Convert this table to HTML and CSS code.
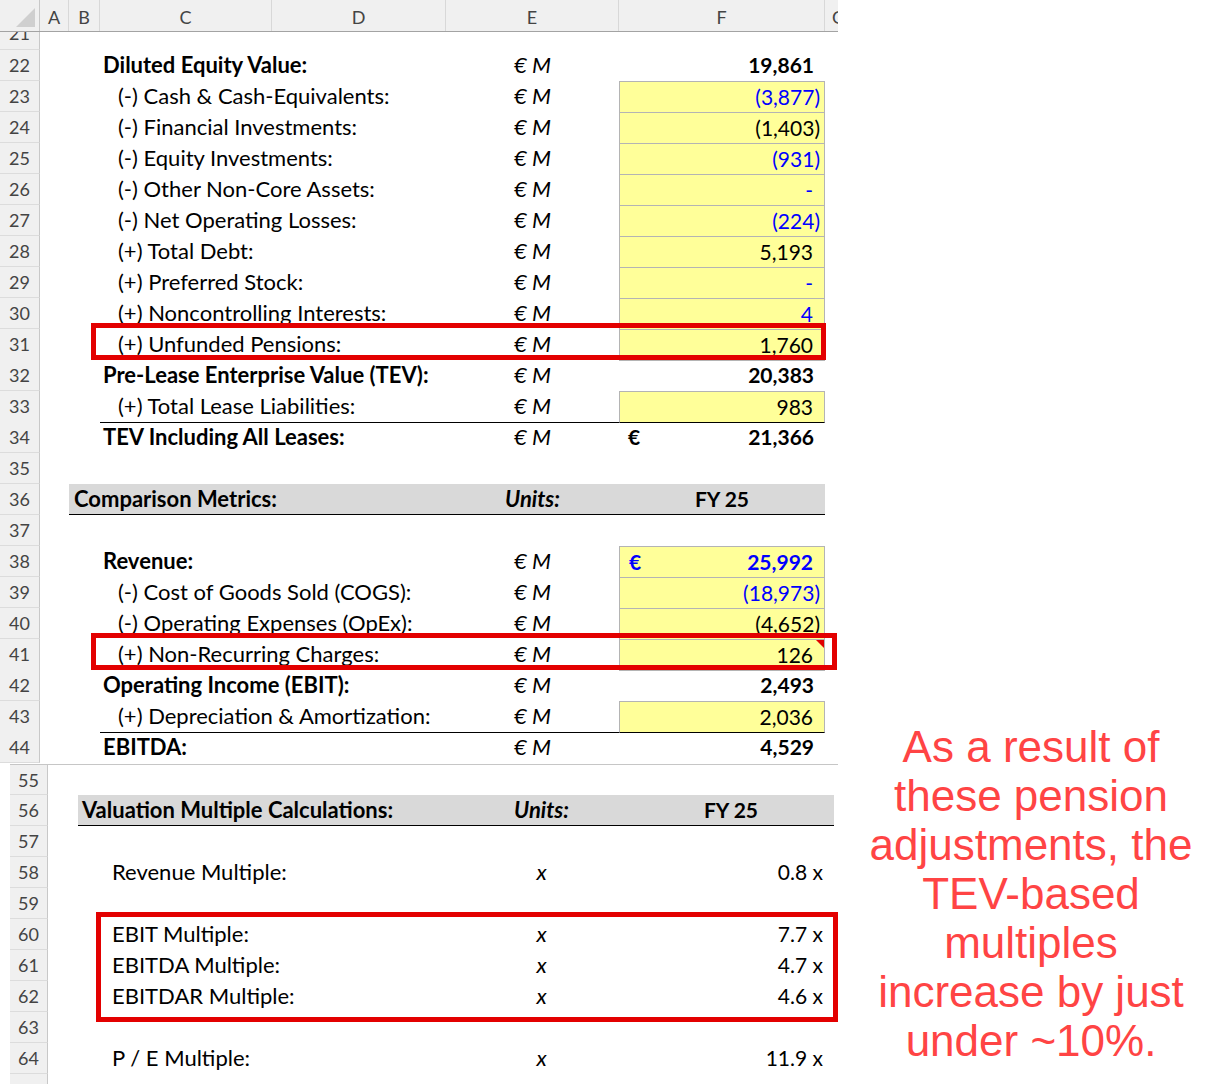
FILE: index.html
```html
<!DOCTYPE html>
<html lang="en">
<head>
<meta charset="utf-8">
<title>Valuation sheet</title>
<link rel="stylesheet" href="styles.css">
</head>
<body>
<div class="page">
  <div class="sheets">
    <section class="sheet top">
      <div class="colhead">
        <div class="corner"><svg width="40" height="31" viewBox="0 0 40 31"><polygon points="35,8 35,27 16,27" fill="#cfcfcf"/></svg></div>
        <div class="ch">A</div><div class="ch">B</div><div class="ch">C</div><div class="ch">D</div><div class="ch">E</div><div class="ch">F</div><div class="ch g">G</div>
      </div>
      <div class="row r21"><div class="rn"><span>21</span></div></div>
      <div class="row"><div class="rn">22</div><div class="lbl b">Diluted Equity Value:</div><div class="unit">€ M</div><div class="val b">19,861</div></div>
      <div class="row"><div class="rn">23</div><div class="lbl ind">(-) Cash &amp; Cash-Equivalents:</div><div class="unit">€ M</div><div class="val y neg bl">(3,877)</div></div>
      <div class="row"><div class="rn">24</div><div class="lbl ind">(-) Financial Investments:</div><div class="unit">€ M</div><div class="val y neg">(1,403)</div></div>
      <div class="row"><div class="rn">25</div><div class="lbl ind">(-) Equity Investments:</div><div class="unit">€ M</div><div class="val y neg bl">(931)</div></div>
      <div class="row"><div class="rn">26</div><div class="lbl ind">(-) Other Non-Core Assets:</div><div class="unit">€ M</div><div class="val y bl">-</div></div>
      <div class="row"><div class="rn">27</div><div class="lbl ind">(-) Net Operating Losses:</div><div class="unit">€ M</div><div class="val y neg bl">(224)</div></div>
      <div class="row"><div class="rn">28</div><div class="lbl ind">(+) Total Debt:</div><div class="unit">€ M</div><div class="val y">5,193</div></div>
      <div class="row"><div class="rn">29</div><div class="lbl ind">(+) Preferred Stock:</div><div class="unit">€ M</div><div class="val y bl">-</div></div>
      <div class="row"><div class="rn">30</div><div class="lbl ind">(+) Noncontrolling Interests:</div><div class="unit">€ M</div><div class="val y bl">4</div></div>
      <div class="row"><div class="rn">31</div><div class="lbl ind">(+) Unfunded Pensions:</div><div class="unit">€ M</div><div class="val y last">1,760</div></div>
      <div class="row"><div class="rn">32</div><div class="lbl b">Pre-Lease Enterprise Value (TEV):</div><div class="unit">€ M</div><div class="val b">20,383</div></div>
      <div class="row ul"><div class="rn">33</div><div class="lbl ind">(+) Total Lease Liabilities:</div><div class="unit">€ M</div><div class="val y">983</div></div>
      <div class="row"><div class="rn">34</div><div class="lbl b">TEV Including All Leases:</div><div class="unit">€ M</div><div class="val b cur"><span>€</span><span>21,366</span></div></div>
      <div class="row"><div class="rn">35</div></div>
      <div class="row hdr"><div class="rn">36</div><div class="hl">Comparison Metrics:</div><div class="unit">Units:</div><div class="val">FY 25</div></div>
      <div class="row"><div class="rn">37</div></div>
      <div class="row"><div class="rn">38</div><div class="lbl b">Revenue:</div><div class="unit">€ M</div><div class="val y b bl cur"><span>€</span><span>25,992</span></div></div>
      <div class="row"><div class="rn">39</div><div class="lbl ind">(-) Cost of Goods Sold (COGS):</div><div class="unit">€ M</div><div class="val y neg bl">(18,973)</div></div>
      <div class="row"><div class="rn">40</div><div class="lbl ind">(-) Operating Expenses (OpEx):</div><div class="unit">€ M</div><div class="val y neg">(4,652)</div></div>
      <div class="row"><div class="rn">41</div><div class="lbl ind">(+) Non-Recurring Charges:</div><div class="unit">€ M</div><div class="val y last cm">126</div></div>
      <div class="row"><div class="rn">42</div><div class="lbl b">Operating Income (EBIT):</div><div class="unit">€ M</div><div class="val b">2,493</div></div>
      <div class="row ul"><div class="rn">43</div><div class="lbl ind">(+) Depreciation &amp; Amortization:</div><div class="unit">€ M</div><div class="val y">2,036</div></div>
      <div class="row"><div class="rn">44</div><div class="lbl b">EBITDA:</div><div class="unit">€ M</div><div class="val b">4,529</div></div>
    </section>

    <section class="sheet bottom">
      <div class="row r55"><div class="rn">55</div></div>
      <div class="row hdr"><div class="rn">56</div><div class="hl">Valuation Multiple Calculations:</div><div class="unit">Units:</div><div class="val">FY 25</div></div>
      <div class="row"><div class="rn">57</div></div>
      <div class="row"><div class="rn">58</div><div class="lbl">Revenue Multiple:</div><div class="unit">x</div><div class="val">0.8 x</div></div>
      <div class="row"><div class="rn">59</div></div>
      <div class="row"><div class="rn">60</div><div class="lbl">EBIT Multiple:</div><div class="unit">x</div><div class="val">7.7 x</div></div>
      <div class="row"><div class="rn">61</div><div class="lbl">EBITDA Multiple:</div><div class="unit">x</div><div class="val">4.7 x</div></div>
      <div class="row"><div class="rn">62</div><div class="lbl">EBITDAR Multiple:</div><div class="unit">x</div><div class="val">4.6 x</div></div>
      <div class="row"><div class="rn">63</div></div>
      <div class="row"><div class="rn">64</div><div class="lbl">P / E Multiple:</div><div class="unit">x</div><div class="val">11.9 x</div></div>
      <div class="row"><div class="rn"></div></div>
    </section>

    <div class="mark m1"></div>
    <div class="mark m2"></div>
    <div class="mark m3"></div>
  </div>

  <p class="note">As a result of<br>these pension<br>adjustments, the<br>TEV-based<br>multiples<br>increase by just<br>under ~10%.</p>
</div>
</body>
</html>
```

FILE: styles.css
```css
* { box-sizing: border-box; }
html, body { margin: 0; padding: 0; background: #fff; }
body { font-family: Lato, "Noto Sans", sans-serif; color: #000; }

.page { display: flex; width: 1216px; height: 1084px; overflow: hidden; }
.sheets { position: relative; flex: none; width: 838px; height: 1084px; overflow: hidden; }

.sheet { font-size: 22px; }
.top { --cols: 40px 29px 31px 346px 173px 206px 13px; width: 838px; }
.bottom { --cols: 38px 30px 31px 346px 173px 206px 4px; width: 828px; margin: 1px 0 0 10px; border-top: 1px solid #c6c6c6; }

/* column header */
.colhead {
  display: grid;
  grid-template-columns: 40px 29px 31px 172px 174px 173px 206px 13px;
  height: 32px;
  background: #f0f0f0;
  border-bottom: 1px solid #a3a3a3;
}
.corner { border-right: 1px solid #c8c8c8; }
.corner svg { display: block; }
.ch {
  text-align: center; color: #444; font-size: 18px;
  line-height: 27px; padding-top: 4px;
  border-right: 1px solid #d8d8d8;
  overflow: hidden; white-space: nowrap;
}
.ch.g { text-align: left; padding-left: 7px; border-right: 0; }

/* rows */
.row { display: grid; grid-template-columns: var(--cols); height: 31px; line-height: 30px; }
.r21 { height: 18px; }
.r55 { height: 30px; }
.rn {
  grid-column: 1; background: #f0f0f0; color: #444; font-size: 18px;
  text-align: center; border-right: 1px solid #c8c8c8; border-bottom: 1px solid #dcdcdc;
  overflow: hidden;
}
.r21 .rn { display: flex; align-items: flex-end; justify-content: center; }
.r21 .rn span { display: block; height: 31px; line-height: 31px; flex: none; }

.lbl { grid-column: 4; white-space: nowrap; padding-left: 3px; }
.lbl.ind { padding-left: 18px; }
.unit { grid-column: 5; text-align: center; font-style: italic; }
.val { grid-column: 6; text-align: right; padding-right: 11px; white-space: nowrap; font-size: 21px; }
.val.neg { padding-right: 4px; }
.val.cur { display: flex; justify-content: space-between; padding-left: 9px; }

.b { font-weight: bold; }
.bl { color: #0000ff; }

.y { background: #ffff99; border: 1px solid #b4b4b4; border-bottom: 0; }
.y.last { border-bottom: 1px solid #b4b4b4; }
.ul .lbl, .ul .unit, .ul .val { border-bottom: 1px solid #000; }

.cm { position: relative; }
.cm::after {
  content: ""; position: absolute; top: 0; right: 0;
  border-top: 8px solid #e00000; border-left: 8px solid transparent;
}

/* section header rows */
.hdr .hl, .hdr .unit, .hdr .val { background: #d9d9d9; border-bottom: 1px solid #000; font-weight: bold; }
.hdr .hl { grid-column: 3 / 5; padding-left: 5px; white-space: nowrap; }
.hdr .val { text-align: center; padding: 0; }
.bottom .hdr .hl { padding-left: 4px; }

/* annotation boxes */
.mark { position: absolute; border: 5px solid #e30000; }
.m1 { left: 91px; top: 323px; width: 735px; height: 37px; }
.m2 { left: 91px; top: 633px; width: 746px; height: 37px; }
.m3 { left: 96px; top: 912px; width: 742px; height: 110px; }

/* callout */
.note {
  flex: 1; margin: 0; padding: 722px 0 0 8px;
  text-align: center;
  font-family: "Liberation Sans", Arial, sans-serif;
  font-size: 44px; line-height: 49px; color: #ff4444;
}
```
